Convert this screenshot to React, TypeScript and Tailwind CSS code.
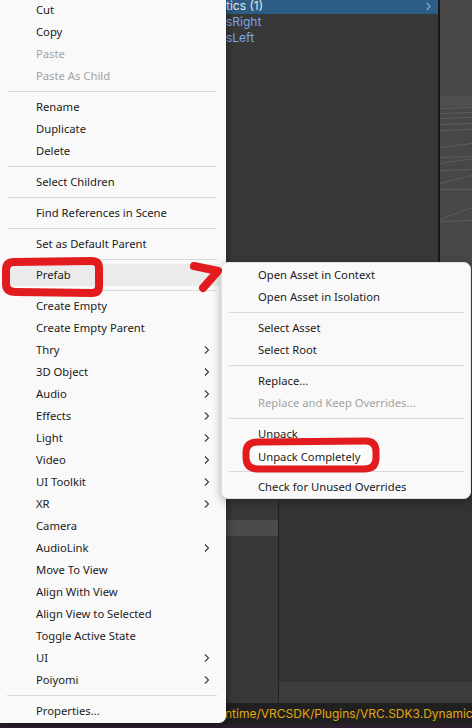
import React from 'react';

type Entry =
  | { label: string; disabled?: boolean; sub?: boolean; active?: boolean; mark?: boolean }
  | 'sep';

const mainItems: Entry[] = [
  { label: 'Cut' },
  { label: 'Copy' },
  { label: 'Paste', disabled: true },
  { label: 'Paste As Child', disabled: true },
  'sep',
  { label: 'Rename' },
  { label: 'Duplicate' },
  { label: 'Delete' },
  'sep',
  { label: 'Select Children' },
  'sep',
  { label: 'Find References in Scene' },
  'sep',
  { label: 'Set as Default Parent' },
  'sep',
  { label: 'Prefab', active: true },
  'sep',
  { label: 'Create Empty' },
  { label: 'Create Empty Parent' },
  { label: 'Thry', sub: true },
  { label: '3D Object', sub: true },
  { label: 'Audio', sub: true },
  { label: 'Effects', sub: true },
  { label: 'Light', sub: true },
  { label: 'Video', sub: true },
  { label: 'UI Toolkit', sub: true },
  { label: 'XR', sub: true },
  { label: 'Camera' },
  { label: 'AudioLink', sub: true },
  { label: 'Move To View' },
  { label: 'Align With View' },
  { label: 'Align View to Selected' },
  { label: 'Toggle Active State' },
  { label: 'UI', sub: true },
  { label: 'Poiyomi', sub: true },
  'sep',
  { label: 'Properties...' },
];

const prefabItems: Entry[] = [
  { label: 'Open Asset in Context' },
  { label: 'Open Asset in Isolation' },
  'sep',
  { label: 'Select Asset' },
  { label: 'Select Root' },
  'sep',
  { label: 'Replace...' },
  { label: 'Replace and Keep Overrides...', disabled: true },
  'sep',
  { label: 'Unpack' },
  { label: 'Unpack Completely', mark: true },
  'sep',
  { label: 'Check for Unused Overrides' },
];

function Chevron() {
  return (
    <svg width="6" height="10" viewBox="0 0 6 10" className="text-[#3a3a3a]">
      <path d="M1 1.5 L4.5 5 L1 8.5" fill="none" stroke="currentColor" strokeWidth="1.1" />
    </svg>
  );
}

function MenuList({ items, sepClass }: { items: Entry[]; sepClass: string }) {
  return (
    <div className="flex flex-col">
      {items.map((it, i) =>
        it === 'sep' ? (
          <div key={i} className={`h-px my-1 bg-[#d9d9d9] ${sepClass}`} />
        ) : (
          <div
            key={i}
            className={`h-[22px] flex items-center justify-between ${
              it.active ? 'bg-[#ebebeb] ml-[4px] mr-[6px] rounded-[3px] pl-[32px] pr-[10px]' : 'pl-[36px] pr-[16px]'
            } ${it.disabled ? 'text-[#a3a3a3]' : 'text-[#1b1b1b]'}`}
          >
            <span className={it.mark ? 'bg-white -mx-[3px] px-[3px] leading-[15px]' : ''}>{it.label}</span>
            {it.sub && <Chevron />}
          </div>
        )
      )}
    </div>
  );
}

function SceneLines() {
  return (
    <svg width="32" height="262" viewBox="0 0 32 262" className="block">
      <rect x="0" y="0" width="32" height="262" fill="#474747" />
      <rect x="0" y="96" width="32" height="10" fill="#4f4f4f" />
      <g stroke="#5c5c5c" strokeWidth="1">
        <line x1="0" y1="108.5" x2="32" y2="107.5" />
        <line x1="0" y1="113.5" x2="32" y2="112.5" />
        <line x1="0" y1="118.5" x2="32" y2="117.5" />
        <line x1="0" y1="124.5" x2="32" y2="123.5" />
        <line x1="0" y1="130.5" x2="32" y2="129.5" />
        <line x1="0" y1="147.5" x2="32" y2="143.5" />
        <line x1="0" y1="157.5" x2="32" y2="156.5" />
        <line x1="0" y1="163.5" x2="32" y2="158.5" />
        <line x1="0" y1="170.5" x2="32" y2="169.5" />
        <line x1="0" y1="183.5" x2="32" y2="175.5" />
        <line x1="0" y1="189.5" x2="32" y2="189.5" />
        <line x1="0" y1="219.5" x2="32" y2="207.5" />
        <line x1="0" y1="221.5" x2="32" y2="220.5" />
      </g>
    </svg>
  );
}

export default function App() {
  return (
    <div className="relative w-[472px] h-[728px] overflow-hidden bg-[#383838] flex flex-col font-['Inter',sans-serif] text-[12px]">
      {/* editor background */}
      <div className="flex flex-row h-[400px]">
        <div className="w-[226px] shrink-0" />
        <div className="w-[212px] shrink-0 bg-[#383838] flex flex-col -mt-[2px]">
          <div className="h-4 flex items-center justify-between bg-[#2c5d87] pr-[7px]">
            <span className="text-[#e6e6e6] whitespace-nowrap">tics (1)</span>
            <svg width="5" height="9" viewBox="0 0 5 9">
              <path d="M0.8 0.8 L4 4.5 L0.8 8.2" fill="none" stroke="#8eadcc" strokeWidth="1.2" />
            </svg>
          </div>
          <div className="h-4 flex items-center text-[#7ea7e3]">sRight</div>
          <div className="h-4 flex items-center text-[#7ea7e3]">sLeft</div>
        </div>
        <div className="w-[2px] shrink-0 bg-[#191919]" />
        <div className="flex-1 bg-[#474747]">
          <SceneLines />
        </div>
      </div>
      <div className="flex flex-row flex-1">
        <div className="w-[226px] shrink-0" />
        <div className="w-[52px] shrink-0 bg-[#383838] flex flex-col pt-[120px]">
          <div className="h-4 bg-[#4b4b4b]" />
        </div>
        <div className="w-px shrink-0 bg-[#232323]" />
        <div className="flex-1 bg-[#333333] flex flex-col justify-end">
          <div className="h-[21px] bg-[#3c3c3c]" />
        </div>
      </div>
      <div className="h-[21px] bg-[#202020] flex items-center overflow-hidden">
        <div className="w-[226px] shrink-0" />
        <span className="text-[#e3a80f] whitespace-nowrap -ml-[1px]">ntime/VRCSDK/Plugins/VRC.SDK3.Dynamic</span>
      </div>
      <div className="h-[4px] bg-[#2b1d2b]" />

      {/* context menu */}
      <div className="absolute left-0 top-0 w-[226px] h-[724px] bg-[#f9f9f9] rounded-br-[7px] shadow-[2px_2px_6px_rgba(0,0,0,0.35)] font-['Noto_Sans',sans-serif] text-[11.25px] -mt-px">
        <MenuList items={mainItems} sepClass="ml-[7px] mr-[9px]" />
      </div>

      {/* prefab submenu */}
      <div className="absolute left-[221px] top-[262px] w-[250px] h-[237px] bg-[#f9f9f9] rounded-[7px] border border-[#e2e2e2] shadow-[0_3px_10px_rgba(0,0,0,0.3)] pt-px font-['Noto_Sans',sans-serif] text-[11.25px]">
        <MenuList items={prefabItems} sepClass="ml-[7px] mr-[6px]" />
      </div>

      {/* red annotations */}
      <svg className="absolute left-0 top-0 pointer-events-none" width="472" height="728" viewBox="0 0 472 728">
        <g fill="none" stroke="#e11b1e" strokeLinecap="round" strokeLinejoin="round">
          <path d="M14 262 Q6 262 6 270 L6 284 Q6 292 16 292 L92 293 Q99 293 99 286 L99 268 Q99 261 91 261 Z" strokeWidth="8" />
          <path d="M194 266 L218 271 L203 288" strokeWidth="8" />
          <path d="M258 442 L366 441 Q376 441 376 452 L376 458 Q376 469 364 469 L258 469 Q246 469 246 457 L246 453 Q246 442 258 442 Z" strokeWidth="7" />
        </g>
      </svg>
    </div>
  );
}
